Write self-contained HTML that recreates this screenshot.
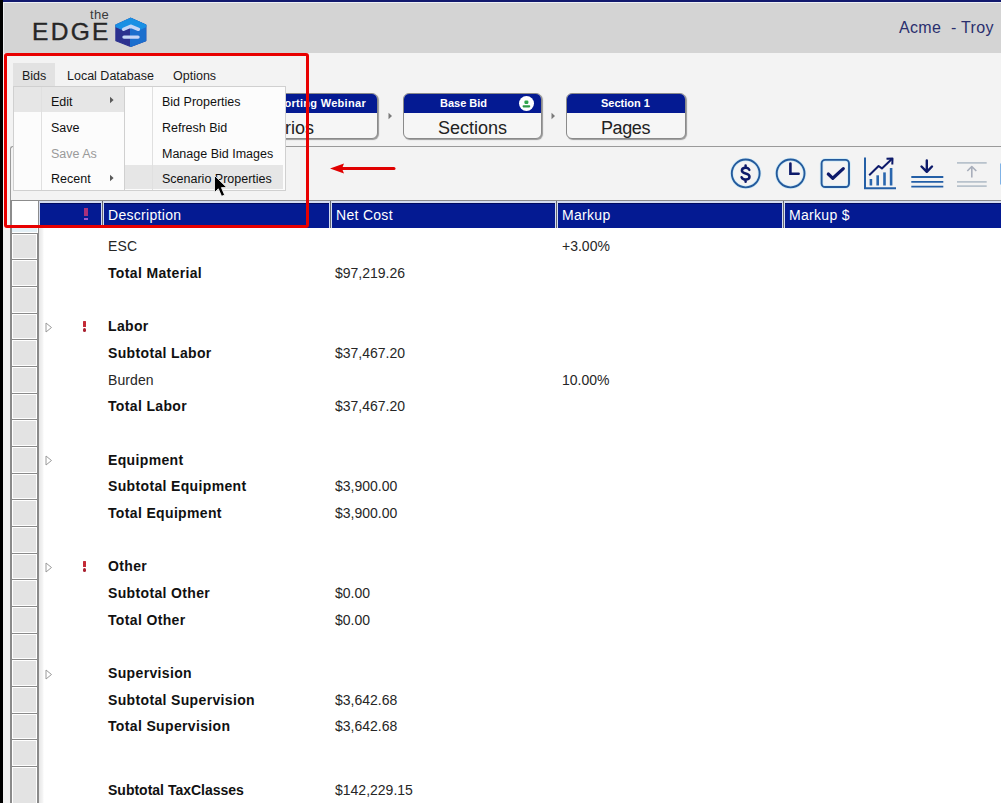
<!DOCTYPE html>
<html><head><meta charset="utf-8">
<style>
*{box-sizing:border-box;margin:0;padding:0}
html,body{width:1001px;height:803px;overflow:hidden;background:#f3f3f3;font-family:"Liberation Sans",sans-serif;color:#111;position:relative}
.a{position:absolute}
.t{position:absolute;white-space:nowrap;line-height:1}
</style></head><body>
<!-- window frame -->
<div class="a" style="left:0;top:0;width:1001px;height:2px;background:#121a6e"></div>
<div class="a" style="left:0;top:0;width:3px;height:803px;background:#000"></div>
<!-- header -->
<div class="a" style="left:3px;top:2px;width:998px;height:51px;background:#d4d4d4;border-top:1px solid #eef0f4;border-left:1px solid #eceef0"></div>
<!-- logo -->
<div class="t" style="left:90px;top:7.5px;font-size:13px;color:#3a3a3a;letter-spacing:0.3px">the</div>
<div class="t" style="left:32px;top:20px;font-size:24.5px;color:#262626;letter-spacing:2.3px;-webkit-text-stroke:0.4px #262626">EDGE</div>
<svg class="a" style="left:110px;top:14px" width="40" height="36" viewBox="110 14 40 36">
  <polygon points="130.6,18.3 145.7,25 145.7,40.7 130.6,46.5 115.9,40.7 115.9,25" fill="#2c318f" stroke="#2c318f" stroke-width="1.2" stroke-linejoin="round"/>
  <polygon points="130.6,18.3 145.7,25 145.7,40.7 130.6,46.5 130.6,31" fill="#1c6fce" stroke="#1c6fce" stroke-width="1.2" stroke-linejoin="round"/>
  <polygon points="130.6,18.3 145.7,25 145.7,26.8 138.4,30 130.6,27 123.6,30 115.9,26.8 115.9,25" fill="#1a90e4" stroke="#1a90e4" stroke-width="1.2" stroke-linejoin="round"/>
  <path d="M123.6 29.3 L130.6 26.2 L138.4 29.3" stroke="#c6d6f6" stroke-width="3.4" fill="none" stroke-linecap="round" stroke-linejoin="round"/>
  <path d="M124 37.1 L138 37.1" stroke="#c6d6f6" stroke-width="3.4" fill="none" stroke-linecap="round"/>
</svg>
<div class="t" style="left:899px;top:20px;font-size:16px;color:#2a2f6e;letter-spacing:0.35px">Acme&nbsp; - Troy</div>

<!-- breadcrumb cards -->
<div class="a" style="left:168px;top:93px;width:210px;height:46px;border:1px solid #8a8a8a;border-radius:6px;background:#f6f6f6;overflow:hidden;box-shadow:1px 1px 1px #999">
  <div class="a" style="left:0;top:0;width:100%;height:19px;background:#041a92"></div>
  <div class="t" style="right:11px;top:4px;font-size:11px;font-weight:bold;color:#fff;letter-spacing:0.3px">Estimating Supporting Webinar</div>
  <div class="t" style="right:63px;top:25px;font-size:18px;color:#222">Scenarios</div>
</div>
<svg class="a" style="left:386px;top:110px" width="8" height="12" viewBox="0 0 8 12"><path d="M2.5 2.8 L6 6 L2.5 9.2 Z" fill="#7a7a7a"/></svg>
<div class="a" style="left:403px;top:93px;width:139px;height:46px;border:1px solid #8a8a8a;border-radius:6px;background:#f6f6f6;overflow:hidden;box-shadow:1px 1px 1px #999">
  <div class="a" style="left:0;top:0;width:100%;height:19px;background:#041a92"></div>
  <div class="t" style="left:36px;top:4px;font-size:11px;font-weight:bold;color:#fff">Base Bid</div>
  <div class="a" style="left:115px;top:2px;width:15px;height:15px;border-radius:50%;background:#fff"></div>
  <svg class="a" style="left:115px;top:2px" width="15" height="15" viewBox="0 0 15 15"><rect x="5.4" y="4.6" width="4" height="3.4" rx="1.2" fill="#2ea64a"/><rect x="3.6" y="9.2" width="7.6" height="2.2" rx="0.8" fill="#2e9a48"/></svg>
  <div class="t" style="left:34px;top:25px;font-size:18px;color:#222">Sections</div>
</div>
<svg class="a" style="left:549px;top:110px" width="8" height="12" viewBox="0 0 8 12"><path d="M2.5 2.8 L6 6 L2.5 9.2 Z" fill="#7a7a7a"/></svg>
<div class="a" style="left:566px;top:93px;width:120px;height:46px;border:1px solid #8a8a8a;border-radius:6px;background:#f6f6f6;overflow:hidden;box-shadow:1px 1px 1px #999">
  <div class="a" style="left:0;top:0;width:100%;height:19px;background:#041a92"></div>
  <div class="t" style="left:34px;top:4px;font-size:11px;font-weight:bold;color:#fff">Section 1</div>
  <div class="t" style="left:34px;top:25px;font-size:18px;color:#222;letter-spacing:-0.4px">Pages</div>
</div>

<!-- panel borders -->
<div class="a" style="left:10px;top:146px;width:991px;height:657px;border-top:1px solid #9a9a9a;border-left:1px solid #9a9a9a;border-top-left-radius:3px"></div>

<!-- red arrow -->
<svg class="a" style="left:328px;top:162px" width="70" height="14" viewBox="0 0 70 14">
  <line x1="14" y1="6.5" x2="66" y2="6.5" stroke="#e00000" stroke-width="3" stroke-linecap="round"/>
  <polygon points="2,6.5 16,1.5 14,6.5 16,11.5" fill="#e00000"/>
</svg>

<!-- toolbar icons -->
<svg class="a" style="left:720px;top:150px" width="281" height="50" viewBox="720 150 281 50">
  <g fill="none" stroke="#bfe8fb" stroke-width="3.6" opacity="0.6">
    <circle cx="745.7" cy="173.45" r="13.9"/>
    <circle cx="790.6" cy="173.45" r="13.9"/>
    <rect x="821.6" y="159.9" width="27.4" height="27.1" rx="3.5"/>
  </g>
  <!-- dollar -->
  <circle cx="745.7" cy="173.45" r="13.9" fill="none" stroke="#245a9c" stroke-width="1.9"/>
  <path d="M749.3 169.9 C748.7 168.4 747.3 167.7 745.6 167.7 C743.3 167.7 741.9 168.9 741.9 170.5 C741.9 172.4 743.6 173 745.6 173.5 C747.8 174 749.5 174.8 749.5 176.8 C749.5 178.5 747.9 179.6 745.6 179.6 C743.7 179.6 742.3 178.8 741.6 177.2 M745.6 165.6 V167.7 M745.6 179.6 V181.8" fill="none" stroke="#0d1a6a" stroke-width="2.5" stroke-linecap="round"/>
  <!-- clock -->
  <circle cx="790.6" cy="173.45" r="13.9" fill="none" stroke="#245a9c" stroke-width="1.9"/>
  <path d="M790.4 163.6 V173.7 H798.6" fill="none" stroke="#0d1a6a" stroke-width="2.6" stroke-linecap="round" stroke-linejoin="miter"/>
  <!-- check -->
  <rect x="821.6" y="159.9" width="27.4" height="27.1" rx="3.5" fill="none" stroke="#245a9c" stroke-width="1.9"/>
  <path d="M828.3 174 L832.8 178.3 L843.3 168.6" fill="none" stroke="#0d1a6a" stroke-width="3.2" stroke-linecap="round" stroke-linejoin="round"/>
  <!-- chart -->
  <path d="M865 157.5 V188.3 H896" fill="none" stroke="#245fa6" stroke-width="2"/>
  <rect x="869.6" y="179" width="2.6" height="6.5" fill="#2a66ad"/>
  <rect x="876.4" y="175.3" width="2.6" height="10.2" fill="#2a66ad"/>
  <rect x="883.2" y="172.4" width="2.6" height="13.1" fill="#2a66ad"/>
  <rect x="889.8" y="168" width="2.6" height="17.5" fill="#2a66ad"/>
  <path d="M869.2 175.3 L878.6 166 L881.9 168.4 L891.6 159.2" fill="none" stroke="#0d1a6a" stroke-width="2" stroke-linejoin="round"/>
  <path d="M886.5 158.8 L892.5 158.5 L892.3 164.5" fill="none" stroke="#0d1a6a" stroke-width="2" stroke-linejoin="round"/>
  <!-- download -->
  <path d="M926.8 160.5 V171.5 M921.5 166.5 L926.8 171.8 L932 166.5" fill="none" stroke="#0d1a6a" stroke-width="2.4" stroke-linejoin="round" stroke-linecap="round"/>
  <path d="M911.3 177 H943.3 M911.3 181.9 H943.3 M911.3 186.6 H943.3" fill="none" stroke="#245fa6" stroke-width="1.8"/>
  <!-- upload disabled -->
  <path d="M957 162.8 H986.7 M957 181.8 H986.7 M957 186.1 H986.7" fill="none" stroke="#b8c2cc" stroke-width="1.7"/>
  <path d="M971.8 167 V177.5 M967.3 171 L971.8 166.5 L976.3 171" fill="none" stroke="#a8aebb" stroke-width="1.6" stroke-linejoin="round"/>
  <rect x="1000" y="163.5" width="2" height="21" fill="#7fb2e6"/>
</svg>


<!-- grid -->
<!-- grid body -->
<div class="a" style="left:39px;top:228px;width:962px;height:575px;background:#fff"></div>
<div class="a" style="left:39px;top:228px;width:5px;height:575px;background:linear-gradient(to right,#e6e6e6,#f4f4f4 70%,#fff)"></div>
<div class="a" style="left:10px;top:201px;width:29px;height:602px;background:#e3e3e3"></div>
<div class="a" style="left:10px;top:200px;width:29px;height:33px;background:#fff;border:1px solid #8c8c8c;border-left-width:2px;border-bottom:none"></div>
<div class="a" style="left:12px;top:228px;width:25px;height:4px;background:#e4f0f6"></div>
<div class="a" style="left:10px;top:232.67px;width:29px;height:27.67px;border:1px solid #8a8a8a;border-left-width:2px;border-right-width:2px;background:#e3e3e3;box-shadow:inset 1px 1px 0 #fff,inset -1px -1px 0 #fff"></div>
<div class="a" style="left:10px;top:259.34px;width:29px;height:27.67px;border:1px solid #8a8a8a;border-left-width:2px;border-right-width:2px;background:#e3e3e3;box-shadow:inset 1px 1px 0 #fff,inset -1px -1px 0 #fff"></div>
<div class="a" style="left:10px;top:286.00px;width:29px;height:27.67px;border:1px solid #8a8a8a;border-left-width:2px;border-right-width:2px;background:#e3e3e3;box-shadow:inset 1px 1px 0 #fff,inset -1px -1px 0 #fff"></div>
<div class="a" style="left:10px;top:312.67px;width:29px;height:27.67px;border:1px solid #8a8a8a;border-left-width:2px;border-right-width:2px;background:#e3e3e3;box-shadow:inset 1px 1px 0 #fff,inset -1px -1px 0 #fff"></div>
<div class="a" style="left:10px;top:339.34px;width:29px;height:27.67px;border:1px solid #8a8a8a;border-left-width:2px;border-right-width:2px;background:#e3e3e3;box-shadow:inset 1px 1px 0 #fff,inset -1px -1px 0 #fff"></div>
<div class="a" style="left:10px;top:366.00px;width:29px;height:27.67px;border:1px solid #8a8a8a;border-left-width:2px;border-right-width:2px;background:#e3e3e3;box-shadow:inset 1px 1px 0 #fff,inset -1px -1px 0 #fff"></div>
<div class="a" style="left:10px;top:392.67px;width:29px;height:27.67px;border:1px solid #8a8a8a;border-left-width:2px;border-right-width:2px;background:#e3e3e3;box-shadow:inset 1px 1px 0 #fff,inset -1px -1px 0 #fff"></div>
<div class="a" style="left:10px;top:419.34px;width:29px;height:27.67px;border:1px solid #8a8a8a;border-left-width:2px;border-right-width:2px;background:#e3e3e3;box-shadow:inset 1px 1px 0 #fff,inset -1px -1px 0 #fff"></div>
<div class="a" style="left:10px;top:446.00px;width:29px;height:27.67px;border:1px solid #8a8a8a;border-left-width:2px;border-right-width:2px;background:#e3e3e3;box-shadow:inset 1px 1px 0 #fff,inset -1px -1px 0 #fff"></div>
<div class="a" style="left:10px;top:472.67px;width:29px;height:27.67px;border:1px solid #8a8a8a;border-left-width:2px;border-right-width:2px;background:#e3e3e3;box-shadow:inset 1px 1px 0 #fff,inset -1px -1px 0 #fff"></div>
<div class="a" style="left:10px;top:499.34px;width:29px;height:27.67px;border:1px solid #8a8a8a;border-left-width:2px;border-right-width:2px;background:#e3e3e3;box-shadow:inset 1px 1px 0 #fff,inset -1px -1px 0 #fff"></div>
<div class="a" style="left:10px;top:526.00px;width:29px;height:27.67px;border:1px solid #8a8a8a;border-left-width:2px;border-right-width:2px;background:#e3e3e3;box-shadow:inset 1px 1px 0 #fff,inset -1px -1px 0 #fff"></div>
<div class="a" style="left:10px;top:552.67px;width:29px;height:27.67px;border:1px solid #8a8a8a;border-left-width:2px;border-right-width:2px;background:#e3e3e3;box-shadow:inset 1px 1px 0 #fff,inset -1px -1px 0 #fff"></div>
<div class="a" style="left:10px;top:579.34px;width:29px;height:27.67px;border:1px solid #8a8a8a;border-left-width:2px;border-right-width:2px;background:#e3e3e3;box-shadow:inset 1px 1px 0 #fff,inset -1px -1px 0 #fff"></div>
<div class="a" style="left:10px;top:606.00px;width:29px;height:27.67px;border:1px solid #8a8a8a;border-left-width:2px;border-right-width:2px;background:#e3e3e3;box-shadow:inset 1px 1px 0 #fff,inset -1px -1px 0 #fff"></div>
<div class="a" style="left:10px;top:632.67px;width:29px;height:27.67px;border:1px solid #8a8a8a;border-left-width:2px;border-right-width:2px;background:#e3e3e3;box-shadow:inset 1px 1px 0 #fff,inset -1px -1px 0 #fff"></div>
<div class="a" style="left:10px;top:659.34px;width:29px;height:27.67px;border:1px solid #8a8a8a;border-left-width:2px;border-right-width:2px;background:#e3e3e3;box-shadow:inset 1px 1px 0 #fff,inset -1px -1px 0 #fff"></div>
<div class="a" style="left:10px;top:686.00px;width:29px;height:27.67px;border:1px solid #8a8a8a;border-left-width:2px;border-right-width:2px;background:#e3e3e3;box-shadow:inset 1px 1px 0 #fff,inset -1px -1px 0 #fff"></div>
<div class="a" style="left:10px;top:712.67px;width:29px;height:27.67px;border:1px solid #8a8a8a;border-left-width:2px;border-right-width:2px;background:#e3e3e3;box-shadow:inset 1px 1px 0 #fff,inset -1px -1px 0 #fff"></div>
<div class="a" style="left:10px;top:739.34px;width:29px;height:27.67px;border:1px solid #8a8a8a;border-left-width:2px;border-right-width:2px;background:#e3e3e3;box-shadow:inset 1px 1px 0 #fff,inset -1px -1px 0 #fff"></div>
<div class="a" style="left:10px;top:766.00px;width:29px;height:60.00px;border:1px solid #8a8a8a;border-left-width:2px;border-right-width:2px;background:#e3e3e3;box-shadow:inset 1px 1px 0 #fff,inset -1px -1px 0 #fff"></div>
<div class="t" style="left:108px;top:239.37px;font-size:14px;font-weight:normal;letter-spacing:0.1px;color:#262626">ESC</div>
<div class="t" style="left:562px;top:239.37px;font-size:14px;color:#262626">+3.00%</div>
<div class="t" style="left:108px;top:266.04px;font-size:14px;font-weight:bold;letter-spacing:0.35px;color:#111">Total Material</div>
<div class="t" style="left:335px;top:266.04px;font-size:14px;color:#262626">$97,219.26</div>
<div class="t" style="left:108px;top:319.37px;font-size:14px;font-weight:bold;letter-spacing:0.35px;color:#111">Labor</div>
<svg class="a" style="left:45px;top:321.97px" width="8" height="11" viewBox="0 0 8 11"><path d="M1 1 L6.5 5.5 L1 10 Z" fill="none" stroke="#9a9a9a" stroke-width="1"/></svg>
<div class="a" style="left:83px;top:321.07px;width:3.2px;height:5.8px;background:#c42a36;border-radius:0.5px"></div>
<div class="a" style="left:83px;top:328.47px;width:3.2px;height:3.2px;background:#a82030;border-radius:1.5px"></div>
<div class="t" style="left:108px;top:346.04px;font-size:14px;font-weight:bold;letter-spacing:0.35px;color:#111">Subtotal Labor</div>
<div class="t" style="left:335px;top:346.04px;font-size:14px;color:#262626">$37,467.20</div>
<div class="t" style="left:108px;top:372.70px;font-size:14px;font-weight:normal;letter-spacing:0.1px;color:#262626">Burden</div>
<div class="t" style="left:562px;top:372.70px;font-size:14px;color:#262626">10.00%</div>
<div class="t" style="left:108px;top:399.37px;font-size:14px;font-weight:bold;letter-spacing:0.35px;color:#111">Total Labor</div>
<div class="t" style="left:335px;top:399.37px;font-size:14px;color:#262626">$37,467.20</div>
<div class="t" style="left:108px;top:452.70px;font-size:14px;font-weight:bold;letter-spacing:0.35px;color:#111">Equipment</div>
<svg class="a" style="left:45px;top:455.30px" width="8" height="11" viewBox="0 0 8 11"><path d="M1 1 L6.5 5.5 L1 10 Z" fill="none" stroke="#9a9a9a" stroke-width="1"/></svg>
<div class="t" style="left:108px;top:479.37px;font-size:14px;font-weight:bold;letter-spacing:0.35px;color:#111">Subtotal Equipment</div>
<div class="t" style="left:335px;top:479.37px;font-size:14px;color:#262626">$3,900.00</div>
<div class="t" style="left:108px;top:506.04px;font-size:14px;font-weight:bold;letter-spacing:0.35px;color:#111">Total Equipment</div>
<div class="t" style="left:335px;top:506.04px;font-size:14px;color:#262626">$3,900.00</div>
<div class="t" style="left:108px;top:559.37px;font-size:14px;font-weight:bold;letter-spacing:0.35px;color:#111">Other</div>
<svg class="a" style="left:45px;top:561.97px" width="8" height="11" viewBox="0 0 8 11"><path d="M1 1 L6.5 5.5 L1 10 Z" fill="none" stroke="#9a9a9a" stroke-width="1"/></svg>
<div class="a" style="left:83px;top:561.07px;width:3.2px;height:5.8px;background:#c42a36;border-radius:0.5px"></div>
<div class="a" style="left:83px;top:568.47px;width:3.2px;height:3.2px;background:#a82030;border-radius:1.5px"></div>
<div class="t" style="left:108px;top:586.04px;font-size:14px;font-weight:bold;letter-spacing:0.35px;color:#111">Subtotal Other</div>
<div class="t" style="left:335px;top:586.04px;font-size:14px;color:#262626">$0.00</div>
<div class="t" style="left:108px;top:612.70px;font-size:14px;font-weight:bold;letter-spacing:0.35px;color:#111">Total Other</div>
<div class="t" style="left:335px;top:612.70px;font-size:14px;color:#262626">$0.00</div>
<div class="t" style="left:108px;top:666.04px;font-size:14px;font-weight:bold;letter-spacing:0.35px;color:#111">Supervision</div>
<svg class="a" style="left:45px;top:668.64px" width="8" height="11" viewBox="0 0 8 11"><path d="M1 1 L6.5 5.5 L1 10 Z" fill="none" stroke="#9a9a9a" stroke-width="1"/></svg>
<div class="t" style="left:108px;top:692.70px;font-size:14px;font-weight:bold;letter-spacing:0.35px;color:#111">Subtotal Supervision</div>
<div class="t" style="left:335px;top:692.70px;font-size:14px;color:#262626">$3,642.68</div>
<div class="t" style="left:108px;top:719.37px;font-size:14px;font-weight:bold;letter-spacing:0.35px;color:#111">Total Supervision</div>
<div class="t" style="left:335px;top:719.37px;font-size:14px;color:#262626">$3,642.68</div>
<div class="t" style="left:108px;top:783.40px;font-size:14px;font-weight:bold">Subtotal TaxClasses</div>
<div class="t" style="left:335px;top:783.40px;font-size:14px;color:#262626">$142,229.15</div>
<div class="a" style="left:39px;top:200px;width:962px;height:28px;background:#666a72;border-top:1px solid #8c8c8c"></div>
<div class="a" style="left:39px;top:201px;width:63px;height:27px;background:#041a92;border:1px solid #d4dcf0;border-top-width:2px;border-bottom:none;box-shadow:inset 0 1px 0 #000a60"></div>
<div class="a" style="left:103px;top:201px;width:227px;height:27px;background:#041a92;border:1px solid #d4dcf0;border-top-width:2px;border-bottom:none;box-shadow:inset 0 1px 0 #000a60"></div>
<div class="t" style="left:108px;top:207.5px;font-size:14px;color:#fff;letter-spacing:0.3px">Description</div>
<div class="a" style="left:331px;top:201px;width:225px;height:27px;background:#041a92;border:1px solid #d4dcf0;border-top-width:2px;border-bottom:none;box-shadow:inset 0 1px 0 #000a60"></div>
<div class="t" style="left:336px;top:207.5px;font-size:14px;color:#fff;letter-spacing:0.3px">Net Cost</div>
<div class="a" style="left:557px;top:201px;width:226px;height:27px;background:#041a92;border:1px solid #d4dcf0;border-top-width:2px;border-bottom:none;box-shadow:inset 0 1px 0 #000a60"></div>
<div class="t" style="left:562px;top:207.5px;font-size:14px;color:#fff;letter-spacing:0.3px">Markup</div>
<div class="a" style="left:784px;top:201px;width:226px;height:27px;background:#041a92;border:1px solid #d4dcf0;border-top-width:2px;border-bottom:none;box-shadow:inset 0 1px 0 #000a60"></div>
<div class="t" style="left:789px;top:207.5px;font-size:14px;color:#fff;letter-spacing:0.3px">Markup $</div>
<div class="a" style="left:84.2px;top:208.4px;width:3.4px;height:8px;background:#a8307a"></div>
<div class="a" style="left:84.2px;top:217.6px;width:3.4px;height:2.2px;background:#9a5ad0"></div>

<!-- menubar -->
<div class="a" style="left:13px;top:63px;width:42px;height:23px;background:#e2e2e2"></div>
<div class="t" style="left:22px;top:69.5px;font-size:12.5px;color:#1a1a1a">Bids</div>
<div class="t" style="left:67px;top:69.5px;font-size:12.5px;color:#1a1a1a">Local Database</div>
<div class="t" style="left:173px;top:69.5px;font-size:12.5px;color:#1a1a1a">Options</div>

<!-- dropdown -->
<div class="a" style="left:13px;top:86px;width:112px;height:105px;background:#fcfcfc;border:1px solid #d0d0d0"></div>
<div class="a" style="left:14px;top:87px;width:110px;height:25px;background:#e6e6e6"></div>
<div class="a" style="left:41px;top:87px;width:1px;height:103px;background:#e0e0e0"></div>
<div class="t" style="left:51px;top:95.5px;font-size:12.5px">Edit</div>
<div class="t" style="left:51px;top:121.5px;font-size:12.5px">Save</div>
<div class="t" style="left:51px;top:147.5px;font-size:12.5px;color:#9a9a9a">Save As</div>
<div class="t" style="left:51px;top:172.5px;font-size:12.5px">Recent</div>



<svg class="a" style="left:108px;top:95px" width="8" height="10" viewBox="0 0 8 10"><path d="M2 1.8 L5.6 5 L2 8.2 Z" fill="#5a5a5a"/></svg>
<svg class="a" style="left:108px;top:173px" width="8" height="10" viewBox="0 0 8 10"><path d="M2 1.8 L5.6 5 L2 8.2 Z" fill="#5a5a5a"/></svg>
<!-- submenu -->
<div class="a" style="left:124px;top:86px;width:162px;height:105px;background:#fcfcfc;border:1px solid #d0d0d0"></div>
<div class="a" style="left:125px;top:165px;width:158px;height:24px;background:#e6e6e6"></div>
<div class="a" style="left:152px;top:87px;width:1px;height:103px;background:#e0e0e0"></div>
<div class="t" style="left:162px;top:95.5px;font-size:12.5px">Bid Properties</div>
<div class="t" style="left:162px;top:121.5px;font-size:12.5px">Refresh Bid</div>
<div class="t" style="left:162px;top:147.5px;font-size:12.5px">Manage Bid Images</div>
<div class="t" style="left:162px;top:172.5px;font-size:12.5px">Scenario Properties</div>

<!-- red highlight box -->
<div class="a" style="left:4px;top:53px;width:305px;height:175px;border:3px solid #e80000;border-radius:3px"></div>

<!-- cursor -->
<svg class="a" style="left:205px;top:170px" width="30" height="32" viewBox="205 170 30 32">
  <path d="M214.5 175.5 L214.5 192.5 L218.3 188.8 L221.6 196.3 L224.6 195 L221.4 187.6 L226.8 187.6 Z" fill="#000" stroke="#fff" stroke-width="0.8" stroke-linejoin="miter"/>
</svg>
</body></html>
